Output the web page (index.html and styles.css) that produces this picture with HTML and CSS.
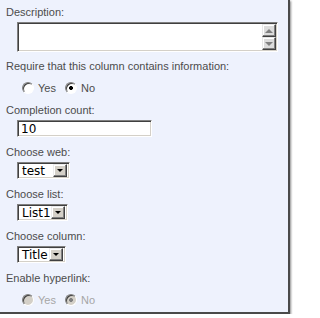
FILE: index.html
```html
<!DOCTYPE html>
<html>
<head>
<meta charset="utf-8">
<link rel="stylesheet" href="styles.css">
</head>
<body>
<div class="panel">
  <div class="label">Description:</div>
  <div class="memo">
    <textarea class="memo-text"></textarea>
    <div class="scroll">
      <span class="sbtn"><span class="tri-up"></span></span>
      <span class="sbtn"><span class="tri-down"></span></span>
    </div>
  </div>

  <div class="label">Require that this column contains information:</div>
  <div class="radios">
    <label class="opt"><span class="radio"></span>Yes</label>
    <label class="opt"><span class="radio on"></span>No</label>
  </div>

  <div class="label">Completion count:</div>
  <div class="field"><span class="input">10</span></div>

  <div class="label">Choose web:</div>
  <div class="field"><span class="select w-web"><span class="val">test</span><span class="drop"><span class="tri-down dark"></span></span></span></div>

  <div class="label">Choose list:</div>
  <div class="field"><span class="select w-list"><span class="val">List1</span><span class="drop"><span class="tri-down dark"></span></span></span></div>

  <div class="label">Choose column:</div>
  <div class="field"><span class="select w-col"><span class="val">Title</span><span class="drop"><span class="tri-down dark"></span></span></span></div>

  <div class="label">Enable hyperlink:</div>
  <div class="radios disabled">
    <label class="opt"><span class="radio"></span>Yes</label>
    <label class="opt"><span class="radio on"></span>No</label>
  </div>
</div>
</body>
</html>
```

FILE: styles.css
```css
html, body {
  margin: 0;
  padding: 0;
  background: #ffffff;
}

body {
  font-family: "Liberation Sans", Arial, sans-serif;
  font-size: 11px;
  color: #4c4c4c;
}

.panel {
  box-sizing: border-box;
  width: 290px;
  height: 314px;
  background: #eef2fd;
  border-right: 2px solid #4a4a4a;
  border-bottom: 2px solid #4a4a4a;
  box-shadow: 1px 1px 2px rgba(0,0,0,0.45);
  padding: 5px 0 0 6px;
}

.label {
  line-height: 14px;
  height: 14px;
  white-space: nowrap;
}

.memo {
  display: flex;
  box-sizing: border-box;
  width: 261px;
  height: 30px;
  margin: 3px 0 7px 11px;
  background: #fff;
  border-top: 1px solid #808080;
  border-left: 1px solid #808080;
  border-right: 1px solid #ffffff;
  border-bottom: 1px solid #ffffff;
  box-shadow: inset 1px 1px 0 #404040, inset -1px -1px 0 #d4d0c8;
  padding: 1px 1px 1px 1px;
}

.memo-text {
  flex: 1;
  border: 0;
  margin: 0;
  padding: 0;
  resize: none;
  background: #fff;
  outline: none;
}

.scroll {
  display: flex;
  flex-direction: column;
  width: 14px;
}

.sbtn {
  box-sizing: border-box;
  flex: 1;
  display: flex;
  align-items: center;
  justify-content: center;
  background: #dcdcdc;
  border-top: 1px solid #e8e8e8;
  border-left: 1px solid #e8e8e8;
  border-right: 1px solid #404040;
  border-bottom: 1px solid #404040;
  box-shadow: inset -1px -1px 0 #808080, inset 1px 1px 0 #ffffff;
}

.tri-up {
  width: 0;
  height: 0;
  border-left: 4px solid transparent;
  border-right: 4px solid transparent;
  border-bottom: 4px solid #808080;
}

.tri-down {
  width: 0;
  height: 0;
  border-left: 4px solid transparent;
  border-right: 4px solid transparent;
  border-top: 4px solid #808080;
}

.tri-down.dark {
  border-left-width: 3px;
  border-right-width: 3px;
  border-top: 3px solid #000;
}

.radios {
  display: flex;
  gap: 9px;
  height: 14px;
  margin: 8px 0 8px 16px;
  align-items: center;
}

.opt {
  display: flex;
  align-items: center;
  gap: 4px;
  line-height: 14px;
}

.radio {
  box-sizing: border-box;
  width: 12px;
  height: 12px;
  border-radius: 50%;
  border: 1px solid;
  border-color: #808080 #ffffff #ffffff #808080;
  background: #fff;
  box-shadow: inset 1px 1px 0 #404040;
}

.radio.on {
  background: radial-gradient(circle, #000 0, #000 1.8px, #fff 2.2px);
}

.radios.disabled {
  color: #a6a6a6;
}

.radios.disabled .radio {
  background: #d4d0c8;
}

.radios.disabled .radio.on {
  background: radial-gradient(circle, #808080 0, #808080 1.8px, #d4d0c8 2.2px);
}

.field {
  display: flex;
  margin: 3px 0 8px 11px;
}

.input,
.select {
  box-sizing: border-box;
  display: flex;
  align-items: center;
  height: 17px;
  background: #fff;
  border-top: 1px solid #808080;
  border-left: 1px solid #808080;
  border-right: 1px solid #ffffff;
  border-bottom: 1px solid #ffffff;
  box-shadow: inset 1px 1px 0 #404040, inset -1px -1px 0 #d4d0c8;
  color: #000;
  font-family: "DejaVu Sans", sans-serif;
  font-size: 12px;
}

.input {
  width: 135px;
  padding-left: 3px;
}

.select {
  padding: 2px;
}

.val {
  flex: 1;
  padding-left: 2px;
}

.drop {
  box-sizing: border-box;
  width: 14px;
  height: 13px;
  display: flex;
  align-items: center;
  justify-content: center;
  background: #d4d0c8;
  border-top: 1px solid #ececec;
  border-left: 1px solid #ececec;
  border-right: 1px solid #404040;
  border-bottom: 1px solid #404040;
  box-shadow: inset -1px -1px 0 #808080, inset 1px 1px 0 #ffffff;
}

.w-web { width: 53px; }
.w-list { width: 51px; }
.w-col { width: 49px; }
```
